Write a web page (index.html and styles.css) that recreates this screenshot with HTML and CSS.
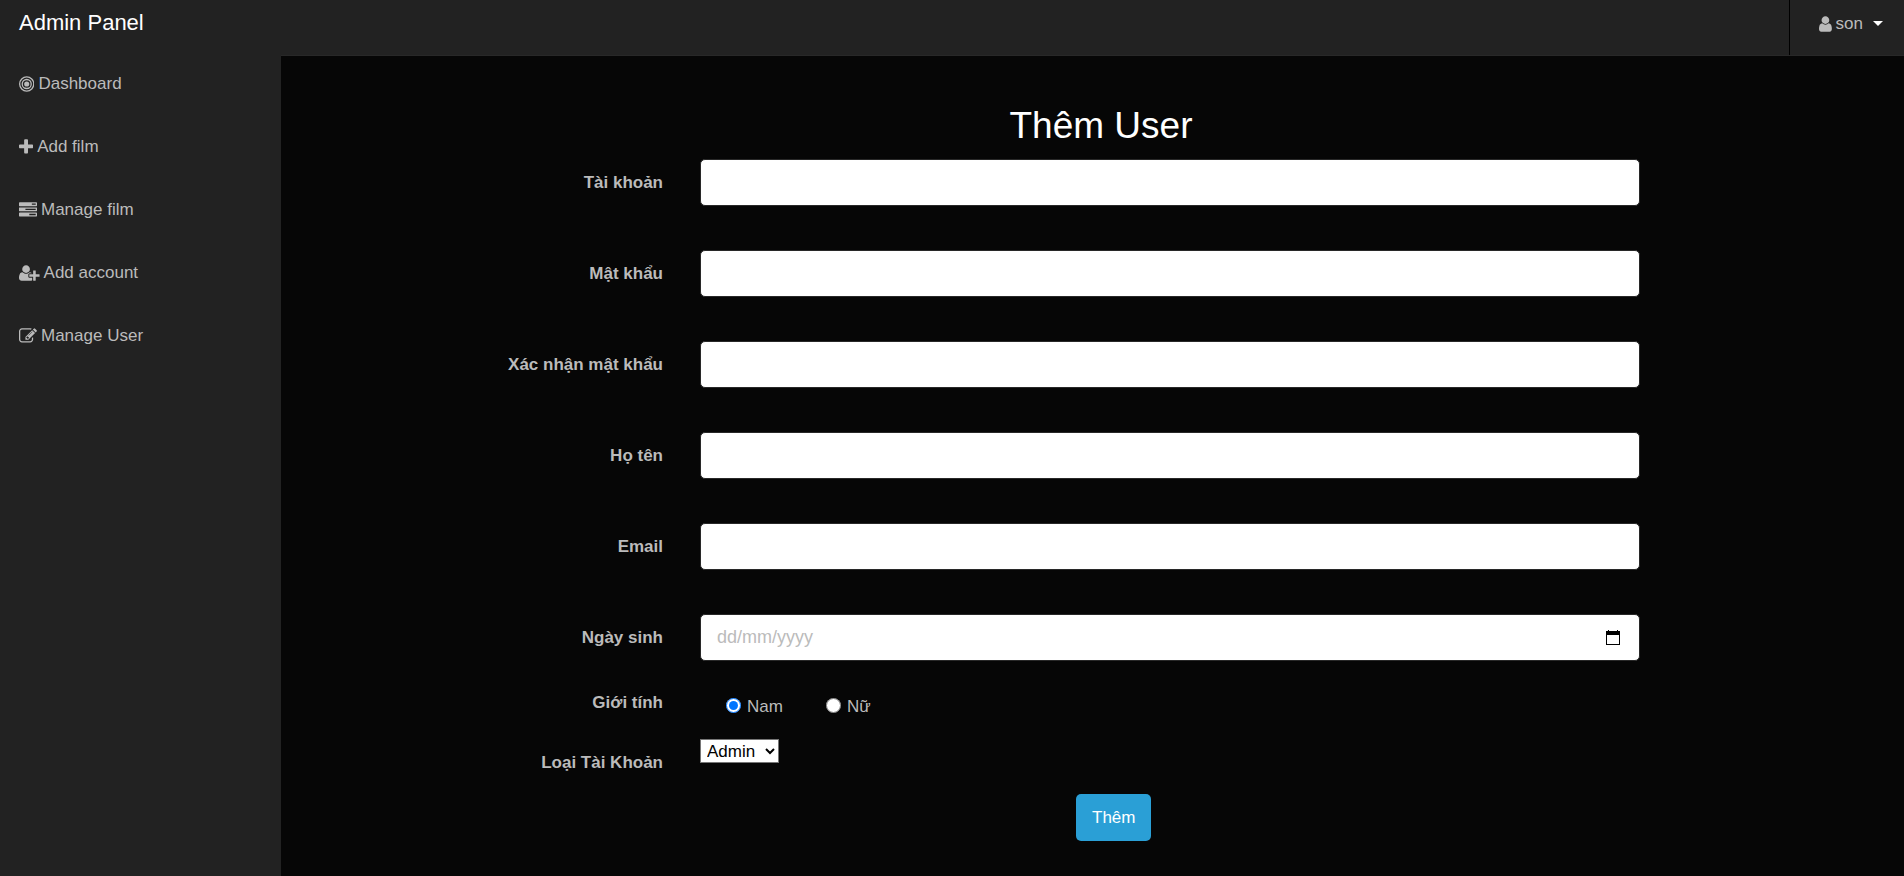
FILE: index.html
```html
<!DOCTYPE html>
<html lang="vi">
<head>
<meta charset="utf-8">
<title>Admin Panel</title>
<link rel="stylesheet" href="styles.css">
</head>
<body>
<header class="navbar">
  <a class="brand" href="#">Admin Panel</a>
  <button class="user-menu" type="button">
    <svg class="icon" viewBox="256 0 1280 1792" aria-hidden="true"><path d="M1536 1399q0 109-62.5 187t-150.5 78h-854q-88 0-150.5-78t-62.5-187q0-85 8.5-160.5t31.5-152 58.5-131 94-89 134.5-34.5q131 128 313 128t313-128q76 0 134.5 34.5t94 89 58.5 131 31.5 152 8.5 160.5zm-256-887q0 159-112.5 271.5t-271.5 112.5-271.5-112.5-112.5-271.5 112.5-271.5 271.5-112.5 271.5 112.5 112.5 271.5z"/></svg>
    <span>son</span>
    <span class="caret"></span>
  </button>
</header>
<div class="page">
  <nav class="sidebar">
    <a class="side-link" href="#"><svg class="icon" viewBox="128 0 1536 1792" aria-hidden="true"><circle cx="896" cy="896" r="256"/><circle class="ring" cx="896" cy="896" r="448"/><circle class="ring" cx="896" cy="896" r="704"/></svg>Dashboard</a>
    <a class="side-link" href="#"><svg class="icon" viewBox="192 0 1408 1792" aria-hidden="true"><path d="M1600 736v192q0 40-28 68t-68 28h-416v416q0 40-28 68t-68 28h-192q-40 0-68-28t-28-68v-416h-416q-40 0-68-28t-28-68v-192q0-40 28-68t68-28h416v-416q0-40 28-68t68-28h192q40 0 68 28t28 68v416h416q40 0 68 28t28 68z"/></svg>Add film</a>
    <a class="side-link" href="#"><svg class="icon" viewBox="0 0 1792 1792" aria-hidden="true"><path d="M1024 1408h640v-128h-640v128zm-384-512h1024v-128h-1024v128zm640-512h384v-128h-384v128zm512 832v256q0 26-19 45t-45 19h-1664q-26 0-45-19t-19-45v-256q0-26 19-45t45-19h1664q26 0 45 19t19 45zm0-512v256q0 26-19 45t-45 19h-1664q-26 0-45-19t-19-45v-256q0-26 19-45t45-19h1664q26 0 45 19t19 45zm0-512v256q0 26-19 45t-45 19h-1664q-26 0-45-19t-19-45v-256q0-26 19-45t45-19h1664q26 0 45 19t19 45z"/></svg>Manage film</a>
    <a class="side-link" href="#"><svg class="icon" viewBox="0 0 2048 1792" aria-hidden="true"><path d="M704 896q-159 0-271.5-112.5t-112.5-271.5 112.5-271.5 271.5-112.5 271.5 112.5 112.5 271.5-112.5 271.5-271.5 112.5zm960 128h352q13 0 22.5 9.5t9.5 22.5v192q0 13-9.5 22.5t-22.5 9.5h-352v352q0 13-9.5 22.5t-22.5 9.5h-192q-13 0-22.5-9.5t-9.5-22.5v-352h-352q-13 0-22.5-9.5t-9.5-22.5v-192q0-13 9.5-22.5t22.5-9.5h352v-352q0-13 9.5-22.5t22.5-9.5h192q13 0 22.5 9.5t9.5 22.5v352zm-736 224q0 52 38 90t90 38h256v238q-68 50-171 50h-874q-121 0-194-69t-73-190q0-53 3.5-103.5t14-109 26.5-108.5 43-97.5 62-81 85.5-53.5 111.5-20q19 0 39 17 79 61 154.5 91.5t164.5 30.5 164.5-30.5 154.5-91.5q20-17 39-17 132 0 217 96h-223q-52 0-90 38t-38 90v192z"/></svg>Add account</a>
    <a class="side-link" href="#"><svg class="icon" viewBox="0 0 1792 1792" aria-hidden="true"><path d="M888 1184l116-116-152-152-116 116v56h96v96h56zm440-720q-16-16-33 1l-350 350q-17 17-1 33t33-1l350-350q17-17 1-33zm80 594v190q0 119-84.5 203.5t-203.5 84.5h-832q-119 0-203.5-84.5t-84.5-203.5v-832q0-119 84.5-203.5t203.5-84.5h832q63 0 117 25 15 7 18 23 3 17-9 29l-49 49q-14 14-32 8-23-6-45-6h-832q-66 0-113 47t-47 113v832q0 66 47 113t113 47h832q66 0 113-47t47-113v-126q0-13 9-22l64-64q15-15 35-7t20 29zm-96-738l288 288-672 672h-288v-288zm444 132l-92 92-288-288 92-92q28-28 68-28t68 28l152 152q28 28 28 68t-28 68z"/></svg>Manage User</a>
  </nav>
  <main class="content">
    <h1 class="title">Thêm User</h1>
    <form class="form">
      <label class="label" for="account">Tài khoản</label>
      <input class="control" id="account" type="text">
      <label class="label" for="password">Mật khẩu</label>
      <input class="control" id="password" type="password">
      <label class="label" for="confirm">Xác nhận mật khẩu</label>
      <input class="control" id="confirm" type="password">
      <label class="label" for="fullname">Họ tên</label>
      <input class="control" id="fullname" type="text">
      <label class="label" for="email">Email</label>
      <input class="control" id="email" type="email">
      <label class="label" for="birthday">Ngày sinh</label>
      <div class="control date">
        <input class="date-input" id="birthday" type="text" placeholder="dd/mm/yyyy">
        <button class="date-button" type="button" aria-label="Chọn ngày">
          <svg class="calendar" viewBox="0 0 14 15" aria-hidden="true"><path d="M0 1h2V0h1v1h8V0h1v1h2v14H0zM1 5v9h12V5z" fill-rule="evenodd"/></svg>
        </button>
      </div>
      <span class="label gender-label" id="gender">Giới tính</span>
      <div class="radios" role="radiogroup" aria-labelledby="gender">
        <label class="choice"><input class="radio" type="radio" name="gender" checked><span class="choice-text">Nam</span></label>
        <label class="choice"><input class="radio" type="radio" name="gender"><span class="choice-text">Nữ</span></label>
      </div>
      <label class="label type-label" for="type">Loại Tài Khoản</label>
      <select class="select" id="type"><option>Admin</option><option>User</option></select>
      <button class="submit" type="submit">Thêm</button>
    </form>
  </main>
</div>
</body>
</html>
```
FILE: styles.css
```css
* {
  box-sizing: border-box;
}

body {
  margin: 0;
  min-height: 100vh;
  display: flex;
  flex-direction: column;
  background: #222;
  color: #bbb;
  font-family: "Liberation Sans", Arial, sans-serif;
  font-size: 17px;
  line-height: 24px;
}

button,
input,
select {
  font-family: inherit;
  font-size: inherit;
  margin: 0;
}

.navbar {
  display: flex;
  justify-content: space-between;
  align-items: stretch;
  height: 55px;
}

.brand {
  padding: 11px 19px;
  color: #fff;
  font-size: 22px;
  text-decoration: none;
}

.user-menu {
  display: flex;
  align-items: center;
  gap: 4px;
  padding: 0 21px 8px 29px;
  border: 0;
  border-left: 1px solid #000;
  background: none;
  color: inherit;
}

.icon {
  height: 18px;
  fill: currentColor;
}

.ring {
  fill: none;
  stroke: currentColor;
  stroke-width: 128;
}

.caret {
  margin-left: 6px;
  border: 5px solid transparent;
  border-top-color: #fff;
  border-bottom: 0;
}

.page {
  flex: 1;
  display: flex;
}

.sidebar {
  width: 281px;
  flex: none;
  padding-top: 11px;
  display: flex;
  flex-direction: column;
  gap: 15px;
}

.side-link {
  display: flex;
  align-items: center;
  gap: 4px;
  padding: 6px 19px 18px;
  color: inherit;
  text-decoration: none;
}

.content {
  flex: 1;
  border-top: 1px solid #282828;
  background: #060606;
}

.title {
  margin: 48px 0 11px;
  padding-left: 17px;
  color: #fff;
  font-size: 37px;
  font-weight: 400;
  line-height: 44px;
  text-align: center;
}

.form {
  display: grid;
  grid-template-columns: 382fr 940fr;
  column-gap: 37px;
  row-gap: 44px;
  padding-right: 264px;
}

.label {
  align-self: center;
  font-weight: 700;
  text-align: right;
}

.control {
  width: 100%;
  height: 47px;
  padding: 0 16px;
  border: 1px solid #282828;
  border-radius: 5px;
  background: #fff;
}

.date {
  display: flex;
  align-items: center;
  justify-content: space-between;
}

.date-input {
  flex: 1;
  padding: 0;
  border: 0;
  background: none;
  font-size: 18px;
}

.date-input::placeholder {
  color: #bbb;
}

.date-button {
  display: flex;
  padding: 0 3px;
  border: 0;
  background: none;
}

.calendar {
  width: 14px;
  height: 15px;
}

.gender-label,
.radios {
  margin-top: -14px;
}

.gender-label {
  align-self: start;
}

.radios {
  display: flex;
  gap: 43px;
  padding-left: 26px;
}

.choice {
  display: flex;
  align-items: center;
  gap: 6px;
}

.choice-text {
  padding-top: 4px;
}

.radio {
  width: 15px;
  height: 15px;
}

.type-label,
.select {
  margin-top: -24px;
}

.type-label {
  padding-top: 12px;
}

.select {
  align-self: start;
  justify-self: start;
  height: 24px;
  width: 79px;
  padding: 0 2px;
  border: 1px solid #767676;
  background: #fff;
  color: #000;
}

.submit {
  grid-column: 2;
  justify-self: start;
  height: 47px;
  margin: -25px 0 35px 40%;
  padding: 0 16px;
  border: 0;
  border-radius: 5px;
  background: #2a9fd6;
  color: #fff;
}
```
